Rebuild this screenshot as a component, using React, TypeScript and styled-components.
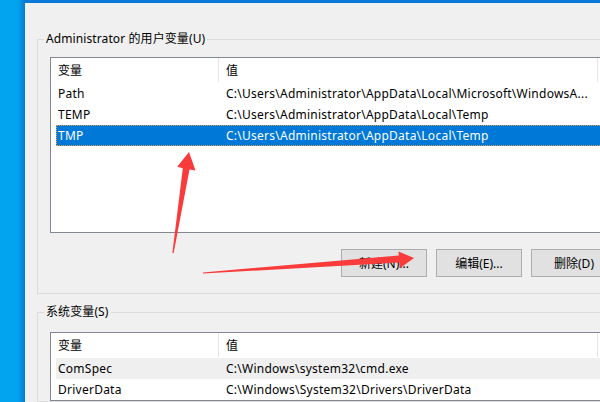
import styled, {createGlobalStyle} from 'styled-components';

type EnvVar = {
  name: string;
  value: string;
  state?: 'selected' | 'hover';
};

// the Path value is shown already shortened, as the list displays it
const userVars: EnvVar[] = [
  {name: 'Path', value: 'C:\\Users\\Administrator\\AppData\\Local\\Microsoft\\WindowsA...'},
  {name: 'TEMP', value: 'C:\\Users\\Administrator\\AppData\\Local\\Temp'},
  {name: 'TMP', value: 'C:\\Users\\Administrator\\AppData\\Local\\Temp', state: 'selected'},
];

const systemVars: EnvVar[] = [
  {name: 'ComSpec', value: 'C:\\Windows\\system32\\cmd.exe', state: 'hover'},
  {name: 'DriverData', value: 'C:\\Windows\\System32\\Drivers\\DriverData'},
];

const GlobalStyle = createGlobalStyle`
  html, body {
    margin: 0;
    padding: 0;
    width: 600px;
    height: 402px;
    overflow: hidden;
    background: #f0f0f0;
  }

  body {
    font-family: "Noto Sans", "Noto Sans CJK SC", sans-serif;
    font-size: 12px;
    color: #000;
  }
`;

function VarList({vars, height}: {vars: EnvVar[]; height?: number}) {
  return (
    <ListBox $height={height}>
      <HeaderRow>
        <HeaderCell>变量</HeaderCell>
        <HeaderCell>值</HeaderCell>
      </HeaderRow>
      {vars.map((v) => (
        <Row key={v.name} $state={v.state}>
          <NameCell>{v.name}</NameCell>
          <ValueCell>{v.value}</ValueCell>
        </Row>
      ))}
    </ListBox>
  );
}

export default function App() {
  return (
    <Screen>
      <GlobalStyle />
      <DesktopStrip />
      <Dialog>
        <Group $first>
          <Legend>Administrator 的用户变量(U)</Legend>
          <VarList vars={userVars} height={176} />
          <ButtonRow>
            <Button>新建(N)...</Button>
            <Button>编辑(E)...</Button>
            <Button>删除(D)</Button>
          </ButtonRow>
        </Group>
        <Group>
          <Legend>系统变量(S)</Legend>
          <VarList vars={systemVars} />
        </Group>
      </Dialog>

      {/* red hand-drawn arrows over the screenshot */}
      <Annotations width="600" height="402" viewBox="0 0 600 402">
        <polygon
          fill="#fa3b3b"
          points="189,152 195.5,170.5 189.5,169.4 173.6,253.2 172.4,252.8 182.8,168.2 177.2,166.8"
        />
        <polygon
          fill="#fa3b3b"
          points="414,258 399.6,268.5 399.3,262.4 203.1,273.6 202.9,272.4 398.8,255.4 398.5,251.5"
        />
      </Annotations>
    </Screen>
  );
}

const Screen = styled.div`
  position: relative;
  display: flex;
  width: 600px;
  height: 402px;
  overflow: hidden;
`;

const DesktopStrip = styled.div`
  flex: 0 0 25px;
  background: linear-gradient(to right, #02a4ef 0, #02a2ee 18px, #0686d6 23px, #0a78cc 25px);
`;

const Dialog = styled.div`
  flex: 0 0 auto;
  width: 640px;
  border-top: 3px solid #0a78d6;
  background: #f0f0f0;
  padding: 0 0 0 12px;
  box-sizing: border-box;
`;

const Group = styled.fieldset<{$first?: boolean}>`
  margin: ${(p) => (p.$first ? '28px' : '10px')} 0 0 0;
  padding: ${(p) => (p.$first ? '10px 12px 16px 12px' : '12px 12px 0 12px')};
  border: 1px solid #dcdcdc;
  border-right: none;
  min-width: 0;
  width: 592px;
  box-sizing: border-box;
`;

const Legend = styled.legend`
  margin-left: -6px;
  padding: 0 2px;
  line-height: 16px;
  font-size: 12px;
  letter-spacing: 0.1px;
  color: #000;
`;

const ListBox = styled.div<{$height?: number}>`
  display: flex;
  flex-direction: column;
  width: 567px;
  height: ${(p) => (p.$height ? `${p.$height}px` : 'auto')};
  box-sizing: border-box;
  border: 1px solid #828790;
  background: #fff;
  padding-left: 5px;
`;

const HeaderRow = styled.div`
  display: grid;
  grid-template-columns: 163px 379px;
  height: 25px;
`;

const HeaderCell = styled.div`
  display: flex;
  align-items: center;
  height: 24px;
  padding-left: 2px;
  border-right: 1px solid #e5e5e5;
  white-space: nowrap;

  & + & {
    padding-left: 7px;
  }
`;

const Row = styled.div<{$state?: 'selected' | 'hover'}>`
  display: grid;
  grid-template-columns: 163px 379px;
  height: 21px;
  align-items: center;
  box-sizing: border-box;
  letter-spacing: 0.25px;
  background: ${(p) =>
    p.$state === 'selected' ? '#0078d7' : p.$state === 'hover' ? '#efefef' : 'transparent'};
  color: ${(p) => (p.$state === 'selected' ? '#fff' : '#000')};
  outline: ${(p) => (p.$state === 'selected' ? '1px dotted #e0a050' : 'none')};
  outline-offset: -1px;
`;

const NameCell = styled.div`
  padding-left: 2px;
  white-space: nowrap;
`;

const ValueCell = styled.div`
  padding: 0 4px 0 7px;
  white-space: nowrap;
`;

const ButtonRow = styled.div`
  display: flex;
  justify-content: flex-end;
  gap: 9px;
  width: 567px;
  margin-top: 16px;
`;

const Button = styled.button`
  width: 86px;
  height: 28px;
  padding: 0;
  border: 1px solid #adadad;
  background: #e1e1e1;
  font-family: "Noto Sans", "Noto Sans CJK SC", sans-serif;
  font-size: 12px;
  color: #000;
`;

const Annotations = styled.svg`
  position: absolute;
  top: 0;
  left: 0;
  pointer-events: none;
`;
